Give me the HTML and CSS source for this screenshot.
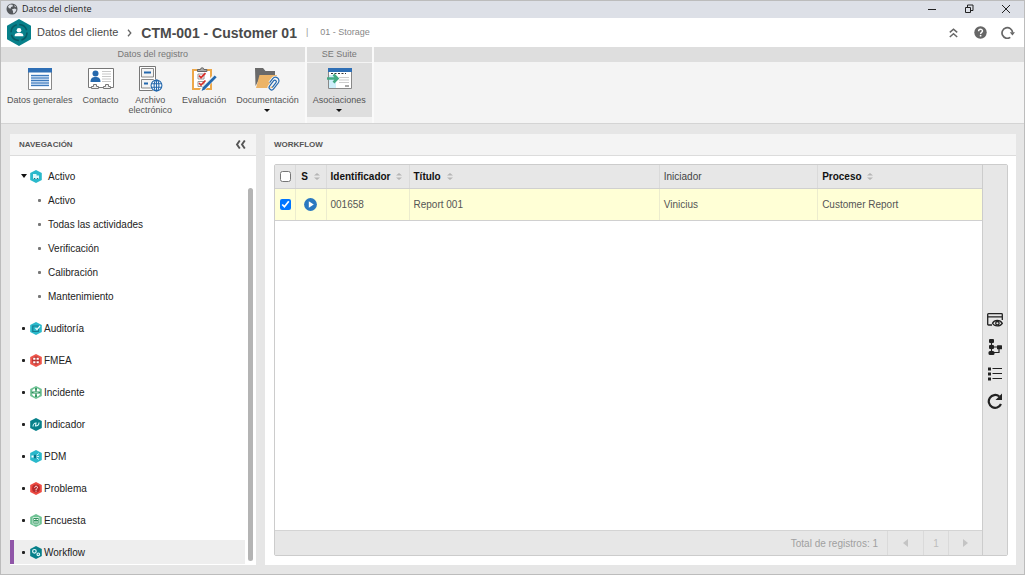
FILE: index.html
```html
<!DOCTYPE html>
<html lang="es">
<head>
<meta charset="utf-8">
<title>Datos del cliente</title>
<link rel="stylesheet" href="styles.css">
</head>
<body>
<svg class="defs" aria-hidden="true">
  <symbol id="hex" viewBox="0 0 12 13"><path d="M6 0 11.8 3V10L6 13 .2 10V3Z"/></symbol>
  <symbol id="sort" viewBox="0 0 6 7"><path d="M0 2.600 3 0l3 2.600zM0 4.400 3 7l3-2.600z"/></symbol>
</svg>
<div class="window">
  <div class="titlebar">
    <svg width="12" height="12" viewBox="0 0 12 12"><circle cx="6" cy="6" r="5.5" fill="#55585c"/><path d="M2 3.2 4 1.5 6.5 1.8 7 3.2 5 4 4.8 5.4 2.8 5.2ZM6 6.2 9 5.4 10.6 6.8 9 9.6 7.2 10.4 7 8.2ZM8.2 2 10 3.4 9 4.2Z" fill="#dde0e7"/></svg>
    <span class="window-name">Datos del cliente</span>
    <div class="window-buttons">
      <button class="bare" aria-label="Minimizar"><svg width="10" height="10" viewBox="0 0 10 10"><path d="M1 5.5h8" stroke="#222"/></svg></button>
      <button class="bare" aria-label="Restaurar"><svg width="10" height="10" viewBox="0 0 10 10" fill="none" stroke="#222"><path d="M1.500 3.500h5v5h-5zM3.500 3.500v-2.500h5.500v5.500h-2.500"/></svg></button>
      <button class="bare" aria-label="Cerrar"><svg width="10" height="10" viewBox="0 0 10 10"><path d="m1 1 8 8M9 1 1 9" stroke="#222"/></svg></button>
    </div>
  </div>

  <header class="header">
    <svg class="logo" width="24" height="27" viewBox="0 0 24 27"><path d="M12 0 24 6.700V20.300L12 27 0 20.300V6.700Z" fill="#07808a"/><circle cx="12" cy="13.500" r="8" fill="none" stroke="#075a64" stroke-width="1.600" stroke-dasharray="10 2.570"/><circle cx="12" cy="11.200" r="2.300" fill="#fff"/><path d="M7.600 17.200c0-3 2-3.200 4.400-3.200s4.400.2 4.400 3.200Z" fill="#fff"/></svg>
    <a class="crumb" href="#">Datos del cliente</a>
    <svg class="crumb-arrow" width="5" height="8" viewBox="0 0 5 8"><path d="M1 .8 3.800 4 1 7.200" fill="none" stroke="#666" stroke-width="1.300"/></svg>
    <h1 class="title">CTM-001 - Customer 01</h1>
    <span class="divider">|</span>
    <span class="storage">01 - Storage</span>
    <div class="header-buttons">
      <button class="bare" aria-label="Contraer"><svg width="9" height="10" viewBox="0 0 9 10" fill="none" stroke="#666" stroke-width="1.500"><path d="M.8 4.400 4.500 1.200 8.200 4.400M.8 9 4.500 5.800 8.200 9"/></svg></button>
      <button class="bare" aria-label="Ayuda"><svg width="13" height="13" viewBox="0 0 13 13"><circle cx="6.500" cy="6.500" r="6.200" fill="#666"/><path d="M4.600 5.200c0-2.600 3.900-2.500 3.900-.2 0 1.400-1.900 1.300-1.900 2.900" fill="none" stroke="#fff" stroke-width="1.400"/><circle cx="6.600" cy="9.700" r=".9" fill="#fff"/></svg></button>
      <button class="bare" aria-label="Recargar"><svg width="14" height="13" viewBox="0 0 14 13"><path d="M9.300 11.400A5.300 5.300 0 1 1 11.600 6.500" fill="none" stroke="#666" stroke-width="1.700"/><path d="M8.800 6.200h5.200L11.400 9.500Z" fill="#666"/></svg></button>
    </div>
  </header>

  <div class="ribbon">
    <section class="group">
      <h2 class="group-name">Datos del registro</h2>
      <div class="tools">
        <button class="tool"><svg width="32" height="26" viewBox="0 0 32 26"><path d="M4.500 2.500h23v21h-23z" fill="#fff" stroke="#888"/><path d="M4 2h24v4.500H4z" fill="#2f6fb5"/><path d="M7 8.500h18v12H7z" fill="#bcd3ee"/><path d="M7 9.500h18m-18 2.500h18m-18 2.500h18m-18 2.500h18m-18 2.500h18" stroke="#2f6fb5" stroke-width=".9"/></svg><span>Datos generales</span></button>
        <button class="tool"><svg width="32" height="26" viewBox="0 0 32 26"><path d="M3.500 2.500h25v19h-25z" fill="#fff" stroke="#777"/><circle cx="10.500" cy="7.500" r="3" fill="#2468ad"/><path d="M5.500 16c0-4 2-5 5-5s5 1 5 5z" fill="#2468ad"/><path d="M17 5.500h9M17 8h9m-9 2.500h9m-9 2.500h9m-9 2.500h9" stroke="#c8c8c8"/><path d="M6.500 22.500v-2h2v-2h3v2h2v2zM18.500 22.500v-2h2v-2h3v2h2v2z" fill="#eee" stroke="#777"/></svg><span>Contacto</span></button>
        <button class="tool"><svg width="32" height="26" viewBox="0 0 32 26"><path d="M5.500.5h16v24h-16z" fill="#fff" stroke="#777"/><path d="M7.500 2.500h12v8.500h-12zM7.500 13.500h12v8.500h-12z" fill="#f4f4f4" stroke="#888"/><path d="M10 6.500h7m-7 11h4" stroke="#2468ad" stroke-width="1.800"/><circle cx="22.500" cy="19.500" r="6.300" fill="#f4f4f4"/><g fill="none" stroke="#2468ad" stroke-width="1.100"><circle cx="22.500" cy="19.500" r="5.400" fill="#fff"/><ellipse cx="22.500" cy="19.500" rx="2.400" ry="5.400"/><path d="M22.500 14v11M17.500 17.700h10M17.500 21.300h10"/></g></svg><span>Archivo<br>electrónico</span></button>
        <button class="tool"><svg width="32" height="26" viewBox="0 0 32 26"><path d="M5 4h18v19H5z" fill="#fff" stroke="#eda84a" stroke-width="2"/><path d="M9.500 5.500v-2h3a1.700 1.700 0 0 1 3.400 0h3v2z" fill="#aaa" stroke="#666"/><path d="M10 8h6v5h-6zM10 15.500h6v5h-6z" fill="#fff" stroke="#999"/><path d="m11 9.700 2 2 4.500-4.500M11 17l2 2 4.500-4.500" fill="none" stroke="#d8312a" stroke-width="1.700"/><path d="M27.500 9.500 16 22l-2.500 3" stroke="#f4f4f4" stroke-width="4.500" fill="none"/><path d="m26.700 9.500 2 1.800L17 23.300l-3.400 1.700 1.200-3.700Z" fill="#2468ad"/></svg><span>Evaluación</span></button>
        <button class="tool"><svg width="32" height="26" viewBox="0 0 32 26"><path d="M4 2h8l2.500 3H24v7H9L4.500 20Z" fill="#6a6a6a"/><path d="M8.500 9H26l-3 13H5Z" fill="#ecb468"/><g transform="rotate(38 22 18)"><path d="M18.500 19v-5a3.500 3.500 0 0 1 7 0v7.500a2.500 2.500 0 0 1-5 0V15a1.500 1.500 0 0 1 3 0v6" fill="none" stroke="#f4f4f4" stroke-width="3"/><path d="M18.500 19v-5a3.500 3.500 0 0 1 7 0v7.500a2.500 2.500 0 0 1-5 0V15a1.500 1.500 0 0 1 3 0v6" fill="none" stroke="#2468ad" stroke-width="1.200"/></g></svg><span>Documentación</span><i class="caret"></i></button>
      </div>
    </section>
    <section class="group">
      <h2 class="group-name">SE Suite</h2>
      <div class="tools suite">
        <button class="tool active"><svg width="32" height="26" viewBox="0 0 32 26"><path d="M5.500 2.500h23v20h-23z" fill="#fff" stroke="#888"/><path d="M6 9h7v13H6z" fill="#cdeefa"/><path d="M5 2h24v4H5z" fill="#2f6fb5"/><path d="M8 7.500h15" stroke="#333" stroke-dasharray="2 1.500"/><path d="M16 11.500h10m-10 2.500h10m-10 2.500h10" stroke="#ccc" stroke-width="1.200"/><path d="M22 20h4" stroke="#555"/><path d="M4 12.500h9.500M10.500 8.500l4 4-4 4" fill="none" stroke="#43a982" stroke-width="2.600"/></svg><span>Asociaciones</span><i class="caret"></i></button>
      </div>
    </section>
    <section class="group rest"><div class="group-name"></div></section>
  </div>

  <main class="content">
    <nav class="panel nav">
      <div class="panel-head"><h2>NAVEGACIÓN</h2>
        <button class="bare" aria-label="Ocultar"><svg width="11" height="9" viewBox="0 0 11 9" fill="none" stroke="#555" stroke-width="1.900"><path d="M4.800.5 2 4.500l2.800 4M9.800.5 7 4.500l2.800 4"/></svg></button></div>
      <div class="nav-body">
        <ul class="tree">
          <li><a class="node parent" href="#"><i class="caret open"></i><svg class="icon" viewBox="0 0 12 13"><use href="#hex" fill="#2ab9cb"/><path d="M3 9V4h3.500v1.500H9V9z" fill="#dff8fb"/><path d="M3.800 8.500h1.500m1.500 0h1.500" stroke="#23717c" stroke-width="1.200"/></svg>Activo</a>
            <ul class="subtree">
              <li><a class="node" href="#"><i class="dot"></i>Activo</a></li>
              <li><a class="node" href="#"><i class="dot"></i>Todas las actividades</a></li>
              <li><a class="node" href="#"><i class="dot"></i>Verificación</a></li>
              <li><a class="node" href="#"><i class="dot"></i>Calibración</a></li>
              <li><a class="node" href="#"><i class="dot"></i>Mantenimiento</a></li>
            </ul></li>
          <li><a class="node" href="#"><i class="dot"></i><svg class="icon" viewBox="0 0 12 13"><use href="#hex" fill="#2ab9cb"/><path d="M2.800 4h5.500v5.500H2.800z" fill="#2ab9cb" stroke="#137d91" stroke-width="1.200"/><path d="m5.500 6 1.500 1.500L10 4" fill="none" stroke="#e8fbfd" stroke-width="1.200"/></svg>Auditoría</a></li>
          <li><a class="node" href="#"><i class="dot"></i><svg class="icon" viewBox="0 0 12 13"><use href="#hex" fill="#ee554b"/><circle cx="6" cy="6.500" r="3.900" fill="#b93230"/><path d="M3.200 3.800h2.200v2H3.200zM6.600 3.800h2.200v2H6.600zM3.200 7.200h2.200v2H3.200zM6.600 7.200h2.200v2H6.600z" fill="#fff"/></svg>FMEA</a></li>
          <li><a class="node" href="#"><i class="dot"></i><svg class="icon" viewBox="0 0 12 13"><use href="#hex" fill="#6fc294"/><circle cx="6" cy="6.500" r="4.300" fill="#fff"/><path d="M6 2v9M1.500 6.500h9" stroke="#278e59" stroke-width="1.800"/><path d="M6 4v5M3.500 6.500h5" stroke="#b9e5cb" stroke-width=".7"/></svg>Incidente</a></li>
          <li><a class="node" href="#"><i class="dot"></i><svg class="icon" viewBox="0 0 12 13"><use href="#hex" fill="#07808a"/><path d="M3 8.500c0-2 1.500-3.500 3-3.500L5.500 8C7.500 8 9 6.500 9 4.500" fill="none" stroke="#d8f7fa" stroke-width="1.100"/></svg>Indicador</a></li>
          <li><a class="node" href="#"><i class="dot"></i><svg class="icon" viewBox="0 0 12 13"><use href="#hex" fill="#2ab9cb"/><path d="M8.800 3.500 5 6.500l3.800 3M5 6.500h4" fill="none" stroke="#d8f7fa"/><path d="M4 4.800h2.500v3.500H4z" fill="#08758a"/><path d="M1.500 6.500h2" stroke="#fff" stroke-width="2"/></svg>PDM</a></li>
          <li><a class="node" href="#"><i class="dot"></i><svg class="icon" viewBox="0 0 12 13"><use href="#hex" fill="#ee4b43"/><circle cx="6" cy="6.500" r="3.900" fill="#b9292b"/><path d="M4.700 5.700c0-2 2.800-1.800 2.800-.2C7.500 6.500 6 6.500 6 8m0 .7v.9" fill="none" stroke="#fff"/></svg>Problema</a></li>
          <li><a class="node" href="#"><i class="dot"></i><svg class="icon" viewBox="0 0 12 13"><use href="#hex" fill="#6fc294"/><path d="M3 3.500h6v6.500H3z" fill="#2f925d" stroke="#e5f8ec" stroke-width=".8"/><path d="M4 5.500h1.500m1 0H8M4 8h4" stroke="#fff"/></svg>Encuesta</a></li>
          <li><a class="node current" href="#"><i class="dot"></i><svg class="icon" viewBox="0 0 12 13"><use href="#hex" fill="#07808a"/><g fill="none" stroke="#e0f8fa" stroke-width="1.200"><circle cx="4.400" cy="5.300" r="1.800"/><circle cx="8.300" cy="8.300" r="1.300"/></g></svg>Workflow</a></li>
        </ul>
        <div class="scrollbar"></div>
      </div>
    </nav>

    <section class="panel work">
      <div class="panel-head"><h2>WORKFLOW</h2></div>
      <div class="grid">
        <div class="grid-main">
          <table class="table">
            <colgroup><col class="c-check"><col class="c-state"><col class="c-id"><col class="c-title"><col class="c-init"><col></colgroup>
            <thead><tr>
              <th><input type="checkbox" aria-label="Seleccionar todo"></th>
              <th class="center">S <svg class="sort"><use href="#sort"/></svg></th>
              <th>Identificador <svg class="sort"><use href="#sort"/></svg></th>
              <th>Título <svg class="sort"><use href="#sort"/></svg></th>
              <th class="plain">Iniciador</th>
              <th>Proceso <svg class="sort"><use href="#sort"/></svg></th>
            </tr></thead>
            <tbody><tr>
              <td><input type="checkbox" checked aria-label="Seleccionar 001658"></td>
              <td class="center"><svg class="play" viewBox="0 0 13 13"><circle cx="6.500" cy="6.500" r="6.400" fill="#2a78c0"/><path d="M4.800 3.300 9.800 6.500l-5 3.200Z" fill="#fff"/></svg></td>
              <td>001658</td><td>Report 001</td><td>Vinicius</td><td>Customer Report</td>
            </tr></tbody>
          </table>
          <div class="pager">
            <span class="total">Total de registros: 1</span>
            <button class="page" aria-label="Anterior"><svg width="5" height="8" viewBox="0 0 5 8"><path d="M5 0v8L0 4z" fill="#c4c4c4"/></svg></button>
            <button class="page number">1</button>
            <button class="page next" aria-label="Siguiente"><svg width="5" height="8" viewBox="0 0 5 8"><path d="M0 0v8l5-4z" fill="#c4c4c4"/></svg></button>
          </div>
        </div>
        <div class="side">
          <button class="bare" aria-label="Ver"><svg width="16" height="16" viewBox="0 0 16 16" fill="none" stroke="#222" stroke-width="1.300"><path d="M5 13H1.500a.8.800 0 0 1-.8-.8V2.500c0-.5.300-.8.800-.8h13c.5 0 .8.300.8.800V8M.7 4.800h14.600"/><path d="M5.500 11.300c2-3.800 7.500-3.800 9.800 0-2.300 3.500-7.800 3.500-9.800 0Z"/><circle cx="10.400" cy="11.200" r="1.700"/></svg></button>
          <button class="bare" aria-label="Flujo"><svg width="16" height="16" viewBox="0 0 16 16"><path d="M4.500 3v11M4.500 8H12v5.500H4.500" fill="none" stroke="#222" stroke-width="1.200"/><rect x="2" y="0" width="5" height="4" rx="1" fill="#222"/><rect x="2" y="6" width="5" height="4" rx="1" fill="#222"/><rect x="1.500" y="12" width="6" height="4" rx="1.500" fill="#222"/><rect x="10" y="6.300" width="5" height="4" rx=".5" fill="#222"/></svg></button>
          <button class="bare" aria-label="Lista"><svg width="16" height="16" viewBox="0 0 16 16"><path d="M1 1.500h3v3H1zM1 6.500h3v3H1zM1 11.500h3v3H1z" fill="#222"/><path d="M5.500 2.500H15M5.500 7.500H15M5.500 12.500H15" stroke="#222"/></svg></button>
          <button class="bare" aria-label="Actualizar"><svg width="16" height="16" viewBox="0 0 16 16"><path d="M14 11A6.400 6.400 0 1 1 12.200 3.400" fill="none" stroke="#222" stroke-width="2.200"/><path d="M15 .5V7H8.500Z" fill="#222"/></svg></button>
        </div>
      </div>
    </section>
  </main>
</div>
</body>
</html>
```
FILE: styles.css
```css
* { box-sizing: border-box; }
body { margin: 0; font-family: "Liberation Sans", Arial, sans-serif; font-size: 10px; line-height: 13px; color: #222; }
h1, h2, ul { margin: 0; padding: 0; }
ul { list-style: none; }
a { color: inherit; text-decoration: none; }
svg { display: block; flex: none; }
button { font: inherit; color: inherit; background: none; border: 0; padding: 0; }
.defs { display: none; }
.bare { display: grid; place-items: center; }

.window { display: flex; flex-direction: column; min-height: 100vh; border: 1px solid #bcbcbc; background: #e6e6e6; }

.titlebar { display: flex; align-items: center; height: 17px; padding: 0 13px 2px 5px; background: #dde0e7; }
.window-name { margin-left: 4px; font-family: "Open Sans", "Noto Sans", sans-serif; font-size: 9px; color: #222; }
.window-buttons { display: flex; gap: 27px; margin-left: auto; }

.header { display: flex; align-items: center; height: 29px; padding: 0 9px 0 6px; background: #fff; color: #4a4a4a; }
.crumb { margin-left: 6px; font-size: 11px; }
.crumb-arrow { margin: 0 9px; }
.title { font-size: 14px; line-height: 16px; }
.divider { margin: 0 12px 0 9px; color: #999; font-size: 9px; }
.storage { font-size: 9px; color: #888; }
.header-buttons { display: flex; align-items: center; gap: 14px; margin-left: auto; }
.header-buttons .bare:first-child { margin-right: 2px; }

.ribbon { display: flex; gap: 2px; height: 77px; border-bottom: 1px solid #d4d4d4; background: #fafafa; font-size: 9px; line-height: 10px; color: #555; }
.group { display: flex; flex-direction: column; background: #f4f4f4; }
.group-name { height: 15px; background: #dedede; text-align: center; font-size: 9px; line-height: 15px; font-weight: 400; color: #777; }
.rest { flex: 1; }
.tools { display: flex; gap: 10px; padding: 2px 6px 0; }
.suite { padding: 1px 0 0; }
.tool { display: flex; flex-direction: column; align-items: center; padding-top: 2px; }
.tool span { margin-top: 3px; }
.active { height: 54px; padding: 3px 6px 0; background: #dedede; }
.caret { border: 3px solid transparent; border-top-color: #111; border-bottom: 0; margin-top: 4px; }

.content { display: flex; flex: 1; gap: 9px; padding: 10px 8px 9px 9px; }
.panel { display: flex; flex-direction: column; background: #fff; }
.panel-head { display: flex; align-items: center; justify-content: space-between; height: 22px; padding: 0 10px 0 9px; border-bottom: 1px solid #dcdcdc; background: #f4f4f4; }
.panel-head h2 { font-size: 8px; line-height: 10px; color: #555; }

.nav { width: 246px; flex: none; }
.nav-body { display: flex; flex: 1; padding-top: 8px; }
.tree { display: flex; flex-direction: column; gap: 8px; flex: 1; }
.node { display: flex; align-items: center; height: 24px; padding-left: 12px; }
.dot { width: 3px; height: 3px; border-radius: 1px; background: #222; margin-right: 5px; }
.icon { width: 12px; height: 13px; margin-right: 2px; }
.parent { padding-left: 11px; }
.parent .icon { margin-right: 6px; }
.open { margin: 0 3px 0 0; border-width: 4px 3px 0; }
.subtree .node { padding-left: 28px; }
.subtree .dot { background: #777; margin-right: 7px; }
.current { border-left: 4px solid #9056a8; padding-left: 8px; background: #eee; }
.scrollbar { width: 5px; margin: 24px 3px 4px; border-radius: 3px; background: #b4b4b4; }

.work { flex: 1; }
.grid { display: flex; flex: 1; margin: 8px 8px 9px 9px; border: 1px solid #ccc; border-radius: 2px; }
.grid-main { display: flex; flex-direction: column; flex: 1; }
.table { width: 100%; table-layout: fixed; border-collapse: collapse; color: #555; }
.c-check { width: 20px; }
.c-state { width: 31px; }
.c-id { width: 83px; }
.c-title { width: 35.400%; }
.c-init { width: 22.400%; }
th, td { padding: 0 0 0 4px; text-align: left; border-bottom: 1px solid #d0d0d0; border-left: 1px solid #dadada; white-space: nowrap; }
th:first-child, td:first-child { border-left: 0; }
th { height: 23px; background: #e7e7e7; color: #111; }
td { height: 32px; background: #ffffd6; border-left-color: #ececce; }
th.plain { color: #444; font-weight: 400; }
.center { padding: 0; text-align: center; }
input { display: block; width: 11px; height: 11px; margin: 0 0 0 1px; }
.sort { display: inline-block; width: 6px; height: 7px; margin-left: 3px; fill: #b5b5b5; }
.play { width: 13px; height: 13px; margin: 0 auto; }
.pager { display: flex; height: 25px; margin-top: auto; border-top: 1px solid #d4d4d4; background: #e7e7e7; color: #a0a0a0; }
.total { margin: 0 9px 0 auto; line-height: 25px; }
.page { display: grid; place-items: center; width: 36px; border-left: 1px solid #dadada; }
.number { width: 25px; color: #bdbdbd; }
.next { width: 34px; }
.side { display: flex; flex-direction: column; align-items: center; justify-content: center; gap: 11px; width: 25px; border-left: 1px solid #ccc; background: #e7e7e7; }
```
